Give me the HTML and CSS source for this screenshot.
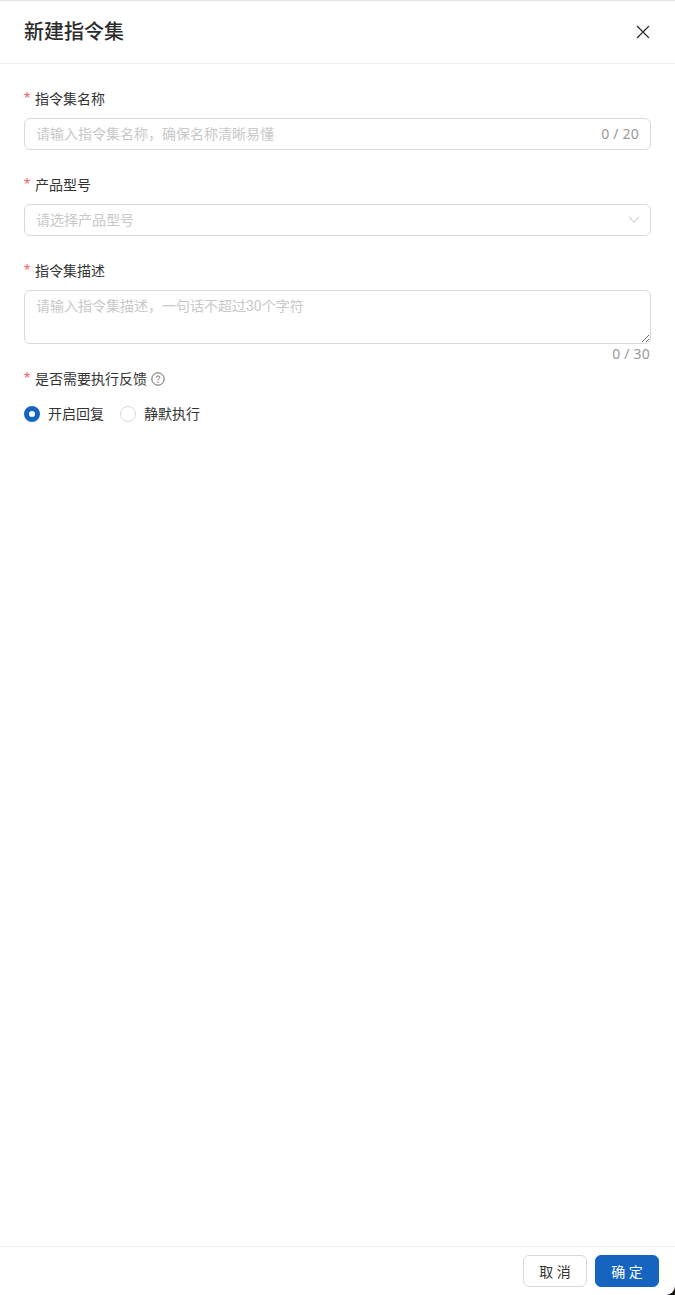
FILE: index.html
```html
<!DOCTYPE html>
<html lang="zh-CN">
<head>
<meta charset="utf-8">
<title>新建指令集</title>
<link rel="stylesheet" href="styles.css">
</head>
<body>
<div class="drawer">
  <header class="head">
    <h1 class="title">新建指令集</h1>
    <button class="close" type="button" aria-label="关闭">
      <svg viewBox="0 0 14 14" width="14" height="14"><path d="M1 1L13 13M13 1L1 13" fill="none" stroke="#2b2b2b" stroke-width="1.2"/></svg>
    </button>
  </header>
  <form class="form">
    <div class="item">
      <label class="label"><span class="req">*</span>指令集名称</label>
      <div class="field">
        <input class="input" type="text" placeholder="请输入指令集名称，确保名称清晰易懂">
        <span class="count">0 / 20</span>
      </div>
    </div>
    <div class="item">
      <label class="label"><span class="req">*</span>产品型号</label>
      <div class="field">
        <input class="input" type="text" placeholder="请选择产品型号">
        <svg class="chev" viewBox="0 0 12 8" width="12" height="8"><path d="M1 .5L6 6.5L11 .5" fill="none" stroke="#c4c4c4" stroke-width="1"/></svg>
      </div>
    </div>
    <div class="item tight">
      <label class="label"><span class="req">*</span>指令集描述</label>
      <textarea class="area" placeholder="请输入指令集描述，一句话不超过30个字符"></textarea>
      <div class="area-count">0 / 30</div>
    </div>
    <div class="item">
      <label class="label"><span class="req">*</span>是否需要执行反馈
        <svg class="help" viewBox="0 0 14 14" width="14" height="14"><circle cx="7" cy="7" r="6.2" fill="none" stroke="#666" stroke-width="1"/><path d="M5.3 5.6C5.3 3.4 8.8 3.5 8.8 5.5C8.8 6.8 7 6.8 7 8.3" fill="none" stroke="#666" stroke-width="1"/><circle cx="7" cy="10.2" r=".7" fill="#666"/></svg>
      </label>
      <div class="radios">
        <span class="radio"><i class="dot on"></i>开启回复</span>
        <span class="radio"><i class="dot"></i>静默执行</span>
      </div>
    </div>
  </form>
  <footer class="foot">
    <button class="btn" type="button">取 消</button>
    <button class="btn primary" type="button">确 定</button>
  </footer>
</div>
</body>
</html>
```
FILE: styles.css
```css
* { box-sizing: border-box; }
html, body { margin: 0; height: 100%; background: #14110d; }
body { font-family: Roboto, "Noto Sans CJK SC", sans-serif; color: #333; font-size: 14px; overflow: hidden; }
.drawer { height: 1295px; background: #fff; border-top: 1px solid #e3e3e3; border-bottom-right-radius: 9px; display: flex; flex-direction: column; }
.head { height: 63px; flex: none; border-bottom: 1px solid #f0f0f0; display: flex; align-items: center; justify-content: space-between; padding: 0 25px 0 24px; }
.title { margin: 0; font-size: 20px; line-height: 28px; font-weight: 500; color: #2b2b2b; }
.close { border: 0; background: none; padding: 0; width: 14px; height: 14px; display: flex; }
.form { flex: 1; padding: 24px 24px 0; }
.item { margin-bottom: 24px; }
.item.tight { margin-bottom: 4px; }
.label { display: flex; align-items: center; height: 22px; line-height: 22px; font-size: 14px; color: #333; margin-bottom: 8px; }
.req { color: #f5606a; width: 11px; font-family: "Liberation Sans", sans-serif; font-size: 16px; flex: none; }
.help { margin-left: 4px; }
.field { position: relative; }
.input, .area { display: block; width: 100%; border: 1px solid #d9d9d9; border-radius: 6px; background: #fff; font: inherit; color: #333; padding: 0 11px; outline: 0; }
.input { height: 32px; }
.area { height: 54px; padding-top: 4px; line-height: 22px; resize: vertical; }
.input::placeholder, .area::placeholder { color: #c8c8c8; opacity: 1; }
.count { position: absolute; right: 12px; top: 5px; line-height: 22px; color: #999; font-family: "Noto Sans", sans-serif; font-weight: 400; letter-spacing: .2px; font-size: 14px; }
.chev { position: absolute; right: 11px; top: 12px; }
.area-count { text-align: right; line-height: 20px; padding-right: 1px; color: #999; font-family: "Noto Sans", sans-serif; letter-spacing: .2px; font-size: 14px; }
.radios { display: flex; gap: 16px; height: 22px; margin-top: 13px; }
.radio { display: flex; align-items: center; gap: 8px; line-height: 22px; color: #333; }
.dot { width: 16px; height: 16px; border-radius: 50%; border: 1px solid #d9d9d9; background: #fff; flex: none; }
.dot.on { border: 5px solid #1565c0; }
.foot { flex: none; height: 49px; border-top: 1px solid #f0f0f0; display: flex; justify-content: flex-end; gap: 8px; padding: 8px 16px 0; }
.btn { height: 32px; width: 64px; border: 1px solid #d9d9d9; border-radius: 6px; background: #fff; font: inherit; color: #333; padding: 0; }
.btn.primary { background: #1565c0; border-color: #1565c0; color: #fff; }
```
